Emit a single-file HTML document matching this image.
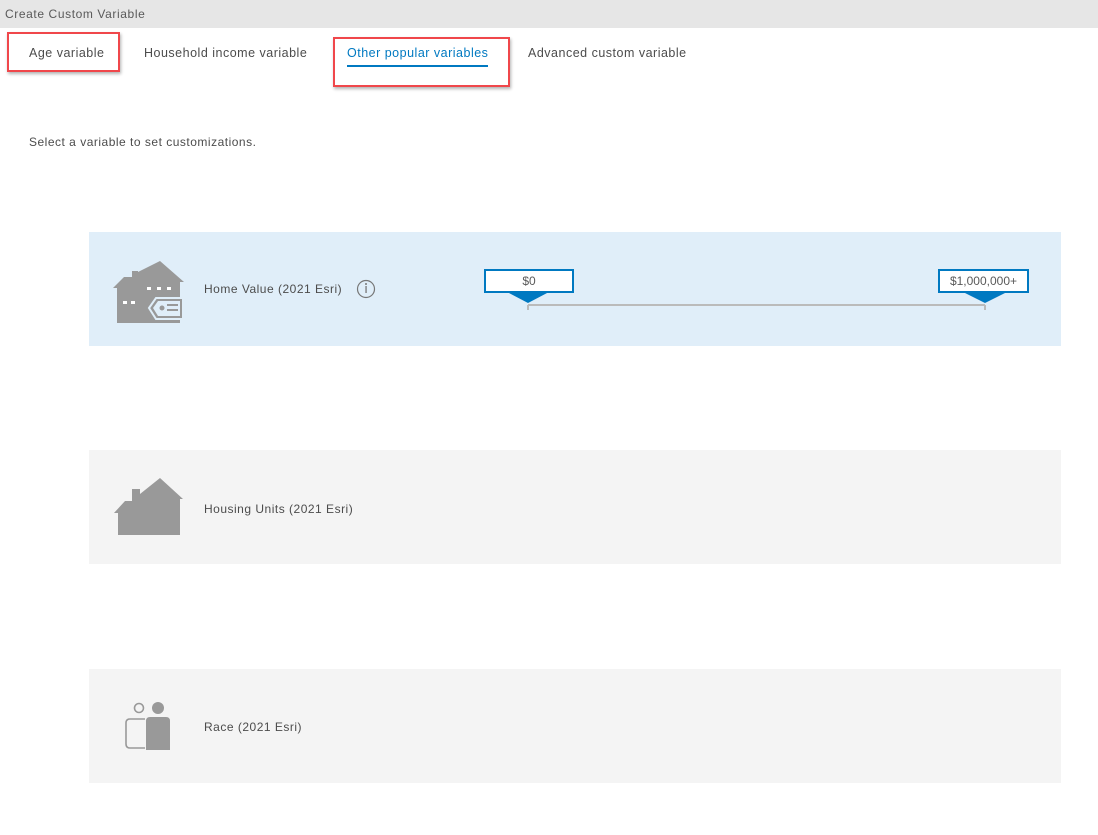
<!DOCTYPE html>
<html><head><meta charset="utf-8"><style>
*{margin:0;padding:0;box-sizing:border-box}
body{width:1098px;height:835px;background:#fff;font-family:"Liberation Sans",Arial,sans-serif;color:#4c4c4c;position:relative;overflow:hidden}
.hdr{position:absolute;left:0;top:0;width:1098px;height:28px;background:#e6e6e6;font-size:12px;color:#595959;padding:7px 0 0 5px;letter-spacing:.6px}
.t{position:absolute;font-size:12.5px;color:#4c4c4c;top:46px;letter-spacing:.5px}
.box{position:absolute;border:2px solid #f0474b;box-shadow:1px 2px 3px rgba(0,0,0,.3)}
.p{position:absolute;left:89px;width:972px;height:114px}
.lbl{position:absolute;font-size:12px;color:#4c4c4c;letter-spacing:.5px}
.sb{position:absolute;height:24px;border:2px solid #0079c1;background:#fff;font-size:12px;color:#595959;text-align:center;line-height:20px}
</style></head><body>
<div class="hdr">Create Custom Variable</div>
<div class="box" style="left:7px;top:32px;width:113px;height:40px"></div>
<div class="box" style="left:333px;top:37px;width:177px;height:50px"></div>
<div class="t" style="left:29px">Age variable</div>
<div class="t" style="left:144px">Household income variable</div>
<div class="t" style="left:347px;color:#0079c1">Other popular variables</div>
<div style="position:absolute;left:347px;top:65px;width:141px;height:2px;background:#0079c1"></div>
<div class="t" style="left:528px">Advanced custom variable</div>
<div class="lbl" style="left:29px;top:135px">Select a variable to set customizations.</div>

<div class="p" style="top:232px;background:#e0eef9"></div>
<div class="p" style="top:450px;background:#f4f4f4"></div>
<div class="p" style="top:669px;background:#f4f4f4"></div>

<svg width="1098" height="835" style="position:absolute;left:0;top:0">
<g fill="#999">
<polygon points="113,288 124,277 132,277 132,271 138,271 138,272 160,261 184,282 180,282 180,323 117,323 117,288"/>
<polygon points="114,513 125,501 132,501 132,489 140,489 140,494 160,478 183,499 180,499 180,535 118,535 118,513"/>
</g>
<g fill="#fff">
<rect x="147" y="287" width="4" height="3"/><rect x="157" y="287" width="4" height="3"/><rect x="167" y="287" width="4" height="3"/>
<rect x="123" y="301" width="4" height="3"/><rect x="131" y="301" width="4" height="3"/>
</g>
<polygon points="149,308 156,298 183,298 183,319 156,319" fill="#999" stroke="#e0eef9" stroke-width="2"/>
<polygon points="153,308 158,301 180,301 180,316 158,316" fill="#e0eef9"/>
<circle cx="162" cy="308" r="2.5" fill="#999"/>
<rect x="167" y="304" width="11" height="2" fill="#999"/><rect x="167" y="309" width="11" height="2" fill="#999"/>
<circle cx="366" cy="289" r="8.5" fill="none" stroke="#777" stroke-width="1.2"/>
<rect x="365.4" y="286" width="1.3" height="7" fill="#777"/><circle cx="366" cy="284" r="1" fill="#777"/>
<path d="M528 305H985M528 305V310M985 305V310" stroke="#bbb" stroke-width="2" fill="none"/>
<polygon points="507,292 549,292 528,303" fill="#0079c1"/>
<polygon points="963,292 1007,292 985,303" fill="#0079c1"/>
<circle cx="139" cy="708" r="4.5" fill="none" stroke="#999" stroke-width="1.6"/>
<circle cx="158" cy="708" r="6" fill="#999"/>
<path d="M145 719H130Q126 719 126 723V744Q126 748 130 748H145" fill="none" stroke="#999" stroke-width="1.6"/>
<path d="M150 717H166Q170 717 170 721V750H146V721Q146 717 150 717Z" fill="#999"/>
</svg>
<div class="sb" style="left:484px;top:269px;width:90px">$0</div>
<div class="sb" style="left:938px;top:269px;width:91px">$1,000,000+</div>
<div class="lbl" style="left:204px;top:282px">Home Value (2021 Esri)</div>
<div class="lbl" style="left:204px;top:502px">Housing Units (2021 Esri)</div>
<div class="lbl" style="left:204px;top:720px">Race (2021 Esri)</div>
</body></html>
